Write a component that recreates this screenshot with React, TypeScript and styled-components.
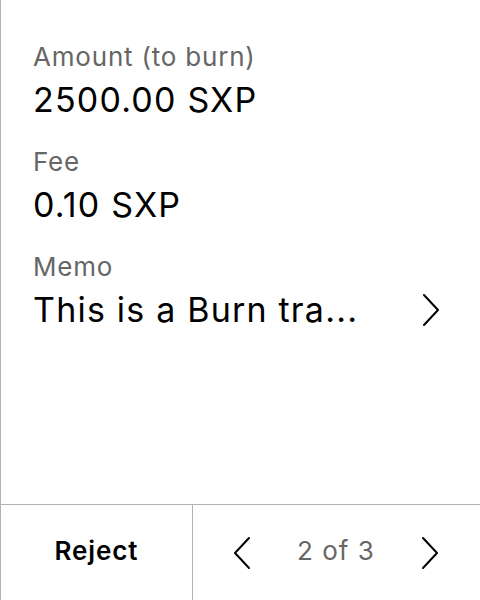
import React from 'react'
import styled, { createGlobalStyle } from 'styled-components'

const GlobalStyle = createGlobalStyle`
  html, body {
    margin: 0;
    padding: 0;
    background: #ffffff;
  }
  body {
    font-family: Inter, "Noto Sans", sans-serif;
    -webkit-font-smoothing: antialiased;
  }
`

const Screen = styled.div`
  width: 480px;
  height: 600px;
  box-sizing: border-box;
  border-left: 1px solid #b3b3b3;
  display: flex;
  flex-direction: column;
  background: #ffffff;
`

const Details = styled.div`
  flex: 1;
  padding: 41px 0 0 32px;
  display: flex;
  flex-direction: column;
  gap: 25px;
`

const Field = styled.div`
  display: flex;
  flex-direction: column;
  gap: 6px;
`

const Label = styled.div`
  font-size: 26px;
  line-height: 32px;
  letter-spacing: 0.8px;
  color: #666666;
`

const ValueRow = styled.div`
  display: flex;
  align-items: center;
  justify-content: space-between;
  padding-right: 41px;
`

const Value = styled.div`
  font-size: 34px;
  line-height: 42px;
  letter-spacing: 1.2px;
  color: #000000;
`

const Footer = styled.div`
  height: 96px;
  box-sizing: border-box;
  border-top: 1px solid #b3b3b3;
  display: grid;
  grid-template-columns: 192px 1fr;
`

const RejectButton = styled.button`
  border: none;
  border-right: 1px solid #b3b3b3;
  background: transparent;
  font-family: inherit;
  font-size: 26px;
  font-weight: 600;
  letter-spacing: 0.9px;
  color: #000000;
  padding: 0 0 4px 0;
  cursor: pointer;
`

const Pager = styled.div`
  display: flex;
  align-items: center;
  justify-content: space-between;
  padding: 0 42px 0 41px;
`

const PageCount = styled.span`
  font-size: 26px;
  letter-spacing: 1px;
  color: #666666;
  padding-bottom: 4px;
`

const Chevron = ({ dir = 'right' }: { dir?: 'left' | 'right' }) => (
  <svg width="16" height="32" viewBox="0 0 16 32" fill="none">
    <path
      d={dir === 'right' ? 'M1 1 L15 16 L1 31' : 'M15 1 L1 16 L15 31'}
      stroke="#000"
      strokeWidth="2"
      strokeLinecap="round"
      strokeLinejoin="round"
    />
  </svg>
)

export default function App() {
  return (
    <>
      <GlobalStyle />
      <Screen>
        <Details>
          <Field>
            <Label>Amount (to burn)</Label>
            <Value>2500.00 SXP</Value>
          </Field>
          <Field>
            <Label>Fee</Label>
            <Value>0.10 SXP</Value>
          </Field>
          <Field>
            <Label>Memo</Label>
            <ValueRow>
              <Value>This is a Burn tra...</Value>
              <Chevron />
            </ValueRow>
          </Field>
        </Details>
        <Footer>
          <RejectButton>Reject</RejectButton>
          <Pager>
            <Chevron dir="left" />
            <PageCount>2 of 3</PageCount>
            <Chevron />
          </Pager>
        </Footer>
      </Screen>
    </>
  )
}
